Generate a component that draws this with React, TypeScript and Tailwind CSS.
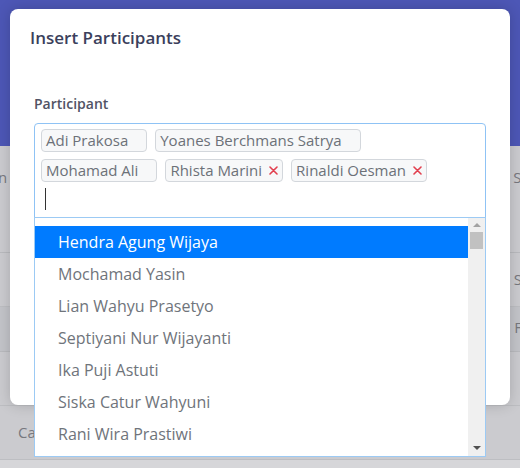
import React from 'react';

const chosen = [
  [
    { name: 'Adi Prakosa', removable: false },
    { name: 'Yoanes Berchmans Satrya', removable: false },
  ],
  [
    { name: 'Mohamad Ali', removable: false },
    { name: 'Rhista Marini', removable: true },
    { name: 'Rinaldi Oesman', removable: true },
  ],
];

const options = [
  'Hendra Agung Wijaya',
  'Mochamad Yasin',
  'Lian Wahyu Prasetyo',
  'Septiyani Nur Wijayanti',
  'Ika Puji Astuti',
  'Siska Catur Wahyuni',
  'Rani Wira Prastiwi',
  'Dewi Lestari',
];

function Tag({ name, removable }: { name: string; removable: boolean }) {
  return (
    <div
      className={
        'flex h-[23px] items-center gap-[7px] rounded-[4px] border border-[#d3d7dc] bg-[#f7f8f9] pl-[4px] text-[15px] leading-none text-[#6c7178] ' +
        (removable ? 'pr-[4px]' : 'pr-[18px]')
      }
    >
      <span>{name}</span>
      {removable && (
        <svg width="9" height="9" viewBox="0 0 9 9" className="shrink-0">
          <path d="M1 1L8 8M8 1L1 8" stroke="#e2404f" strokeWidth="1.6" strokeLinecap="round" />
        </svg>
      )}
    </div>
  );
}

function Background() {
  return (
    <div className="flex h-full flex-col text-[15px] text-[#77787e]">
      <div className="h-[146px] shrink-0 bg-[#4d57b6]" />
      <div className="flex h-[107px] shrink-0 justify-between border-b border-[#b9babe] pt-[20px]">
        <span className="-ml-[2px]">n</span>
        <span className="-mr-[10px]">Se</span>
      </div>
      <div className="flex h-[54px] shrink-0 items-center justify-end border-b border-[#bdbec2]">
        <span className="-mr-[2px]">S</span>
      </div>
      <div className="flex h-[45px] shrink-0 items-center justify-end border-b border-[#b9babe] bg-[#c3c4c9]">
        <span className="mr-[-2px] pb-[4px]">F</span>
      </div>
      <div className="h-[54px] shrink-0 border-b border-[#bdbec2]" />
      <div className="flex h-[54px] shrink-0 items-center border-b border-[#bdbec2] pl-[18px]">
        <span>Ca</span>
      </div>
      <div className="flex-1 bg-[#d6d6d9]" />
    </div>
  );
}

function ScrollBar() {
  return (
    <div className="flex w-[17px] shrink-0 flex-col items-center bg-[#f0f0f0]">
      <div className="mt-[5px] h-0 w-0 border-x-[4px] border-b-[4px] border-x-transparent border-b-[#a3a3a3]" />
      <div className="mt-[5px] h-[17px] w-[13px] bg-[#c1c1c1]" />
      <div className="flex-1" />
      <div className="mb-[6px] h-0 w-0 border-x-[4px] border-t-[4px] border-x-transparent border-t-[#505050]" />
    </div>
  );
}

export default function App() {
  return (
    <div className="relative h-[468px] w-[520px] overflow-hidden bg-[#cbcbcf] font-['Open_Sans',sans-serif]">
      <Background />

      <div className="absolute left-[10px] top-[9px] h-[396px] w-[500px] rounded-[8px] bg-white shadow-[0_0_14px_rgba(0,0,0,0.18)]">
        <div className="px-[20px] pt-[15px]">
          <h2 className="text-[17px] font-semibold leading-[28px] text-[#3b3f5c]">Insert Participants</h2>
        </div>

        <div className="px-[24px] pt-[42px]">
          <label className="block text-[14px] font-semibold leading-[20px] text-[#515365]">Participant</label>

          <div className="relative mt-[9px]">
            <div className="flex h-[95px] flex-col gap-[7px] rounded-t-[4px] border border-[#8fc3f5] px-[6px] pt-[5px]">
              {chosen.map((row, i) => (
                <div key={i} className="flex gap-[8px]">
                  {row.map((t) => (
                    <Tag key={t.name} name={t.name} removable={t.removable} />
                  ))}
                </div>
              ))}
              <div className="ml-[4px] mt-[-1px] h-[22px] w-px bg-[#333]" />
            </div>

            <div className="absolute left-0 top-[94px] flex h-[240px] w-full border border-[#9ccaf4] bg-white">
              <div className="flex-1 overflow-hidden pt-[8px]">
                {options.map((o, i) => (
                  <div
                    key={o}
                    className={
                      'flex h-[32px] items-center pl-[23px] text-[16px] ' +
                      (i === 0 ? 'bg-[#007bff] text-white' : 'text-[#6f747b]')
                    }
                  >
                    {o}
                  </div>
                ))}
              </div>
              <ScrollBar />
            </div>
          </div>
        </div>
      </div>
    </div>
  );
}
